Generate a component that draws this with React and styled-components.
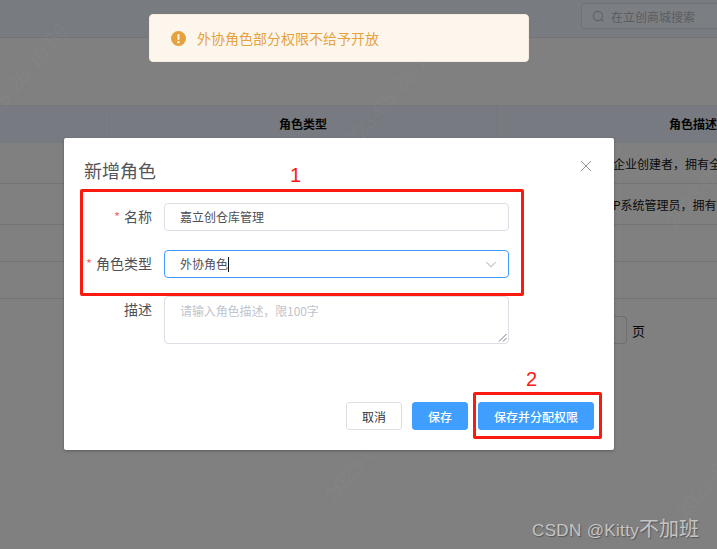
import React from 'react';
import styled, { createGlobalStyle } from 'styled-components';

const Global = createGlobalStyle`
  html, body { margin: 0; padding: 0; width: 717px; height: 549px; overflow: hidden; background: #808080; }
  * { box-sizing: border-box; }
  body { font-family: "Liberation Sans", "Noto Sans CJK SC", sans-serif; }
`;
const cjk = `"Noto Sans CJK SC", "Liberation Sans", sans-serif`;

const Page = styled.div`
  position: relative; width: 717px; height: 549px; overflow: hidden;
  display: flex; flex-direction: column; background: #808080; font-family: ${cjk}; font-size: 12px; color: #000;
`;
const TopBar = styled.header`
  height: 38px; flex: none; background: #787b80; border-bottom: 1px solid #727478;
  display: flex; justify-content: flex-end; align-items: flex-start; padding-top: 3px;
`;
const Search = styled.div`
  width: 140px; margin-right: -4px; height: 26px; border: 1px solid #707276; border-radius: 4px; background: #7b7e83;
  display: flex; align-items: center; gap: 6px; padding-left: 10px; color: #5b5c5f; font-size: 12px; white-space: nowrap;
`;
const Spacer = styled.div` height: 67px; flex: none; `;
const TableHead = styled.div`
  height: 38px; flex: none; background: #777a80; border-top: 1px solid #75777b;
  display: grid; grid-template-columns: 110px 387px 220px; font-size: 12px; font-weight: 700; color: #050505; line-height: 36px;
`;
const HeadCell = styled.div`
  text-align: center; white-space: nowrap;
  border-right: 1px solid #74777c;
  padding-left: ${p => p.$inset || 0}px;
  &:last-child { border-right: 0; text-align: left; }
`;
const Row = styled.div`
  height: ${p => p.$h}px; flex: none; border-bottom: 1px solid #747474; display: flex; justify-content: flex-end;
  align-items: center; font-size: 12px; color: #0a0a0a;
`;
const RowText = styled.span` width: 104px; white-space: nowrap; `;
const Pager = styled.div`
  display: flex; align-items: center; justify-content: flex-end; gap: 5px; padding: 17px 72px 0 0; font-size: 13px; color: #0a0a0a;
`;
const PageBox = styled.div` width: 20px; height: 28px; border: 1px solid #6f6f6f; border-left: none; border-radius: 0 4px 4px 0; `;

const Marks = styled.div` position: absolute; inset: 0; pointer-events: none; `;
const Mark = styled.span`
  position: absolute; left: ${p => p.$x}px; top: ${p => p.$y}px; transform: rotate(-50deg); white-space: nowrap;
  font-size: 21px; color: rgba(255,255,255,0.035); font-family: "Liberation Sans", sans-serif;
`;

const Message = styled.div`
  position: absolute; left: 149px; top: 14px; width: 380px; height: 48px; background: #fdf6ec; border-radius: 4px;
  border: 1px solid #f5ecdf; display: flex; align-items: center; gap: 11px; padding-left: 21px; color: #e6a23c; font-size: 14px;
`;
const Modal = styled.section`
  position: absolute; left: 64px; top: 138px; width: 550px; height: 312px; background: #fff; border-radius: 2px;
  box-shadow: 0 1px 3px rgba(0,0,0,.3); display: flex; flex-direction: column; padding: 20px;
`;
const ModalHead = styled.div` display: flex; justify-content: space-between; align-items: flex-start; height: 24px; `;
const Title = styled.h2` margin: 0; font-size: 18px; line-height: 24px; font-weight: 400; color: #54565b; `;
const Close = styled.button`
  border: 0; background: none; padding: 0; width: 12px; height: 12px; margin: 2px 2px 0 0; display: flex; color: #909399;
`;
const Form = styled.div` display: flex; flex-direction: column; gap: 19px; margin-top: 21px; margin-bottom: auto; `;
const FormRow = styled.div` display: flex; gap: 12px; margin-top: ${p => p.$pull ? '-1px' : '0'}; `;
const Label = styled.label`
  width: 68px; flex: none; text-align: right; font-size: 14px; line-height: 26px; color: #4d5057; white-space: nowrap;
  & > i { font-style: normal; color: #f56c6c; margin-right: 4px; font-size: 13px; }
`;
const Field = styled.div`
  width: 345px; height: ${p => p.$h || 28}px; border: 1px solid ${p => p.$focus ? '#409eff' : '#dcdfe6'}; border-radius: 4px;
  display: flex; align-items: center; justify-content: space-between; padding: 0 15px 2px; font-size: 12px; color: #4d4f55; position: relative;
`;
const Area = styled(Field)` align-items: flex-start; padding-top: 5px; color: #c0c4cc; line-height: 18px; letter-spacing: -0.1px; `;
const Caret = styled.span` display: inline-block; width: 1px; height: 15px; background: #111; vertical-align: -3px; `;
const Chevron = styled.svg` margin: 2px -4px 0 0; `;
const Grip = styled.svg` position: absolute; right: 1px; bottom: 1px; `;
const Footer = styled.div` display: flex; justify-content: flex-end; gap: 10px; `;
const Button = styled.button`
  height: 28px; width: ${p => p.$w}px; border-radius: 3px; font-size: 12px; font-family: inherit; padding: 0;
  border: 1px solid ${p => p.$primary ? '#409eff' : '#dcdfe6'};
  background: ${p => p.$primary ? '#409eff' : '#fff'}; color: ${p => p.$primary ? '#fff' : '#33363b'};
  font-weight: ${p => p.$primary ? 500 : 400};
`;
const RedBox = styled.div`
  position: absolute; left: ${p => p.$x}px; top: ${p => p.$y}px; width: ${p => p.$w}px; height: ${p => p.$h}px;
  border: 3px solid #fb1a0f; border-radius: 2px; pointer-events: none;
`;
const Num = styled.span`
  position: absolute; left: ${p => p.$x}px; top: ${p => p.$y}px; color: #fb1a0f; font-size: 20px; line-height: 24px;
  font-family: "Liberation Sans", sans-serif;
`;
const Credit = styled.span`
  position: absolute; left: 532px; top: 517px; font-size: 17px; letter-spacing: 0.35px; line-height: 22px; color: #c4c4c4; white-space: nowrap;
  text-shadow: 1px 1px 1px #555; font-family: "Liberation Sans", "Noto Sans CJK SC", sans-serif;
`;
const CreditCjk = styled.span` font-size: 20px; letter-spacing: 0; font-family: "Noto Sans CJK SC", sans-serif; `;

const marks = [[-72,78],[313,78],[300,423],[640,150],[650,440]];

export default function App() {
  return (
    <Page>
      <Global />
      <TopBar>
        <Search>
          <svg width="13" height="13" viewBox="0 0 13 13" fill="none" stroke="#5f6164" strokeWidth="1.1"><circle cx="6" cy="6" r="4.6"/><path d="M9.4 9.6l1.8 1.8"/></svg>
          在立创商城搜索
        </Search>
      </TopBar>
      <Spacer />
      <TableHead>
        <HeadCell />
        <HeadCell>角色类型</HeadCell>
        <HeadCell $inset={172}>角色描述</HeadCell>
      </TableHead>
      <Row $h={41}><RowText>企业创建者，拥有全部</RowText></Row>
      <Row $h={41}><RowText>P系统管理员，拥有全</RowText></Row>
      <Row $h={37} />
      <Row $h={37} />
      <Pager><PageBox />页</Pager>
      <Marks>
        {marks.map(([x, y], i) => <Mark key={i} $x={x} $y={y}>2023-05-26 10:59</Mark>)}
      </Marks>
      <Message>
        <svg width="15" height="15" viewBox="0 0 14 14"><circle cx="7" cy="7" r="7" fill="#e6a23c"/><rect x="6.1" y="2.8" width="1.8" height="5.6" rx=".7" fill="#fdf6ec"/><circle cx="7" cy="10.4" r="1.1" fill="#fdf6ec"/></svg>
        外协角色部分权限不给予开放
      </Message>
      <Modal>
        <ModalHead>
          <Title>新增角色</Title>
          <Close aria-label="关闭">
            <svg width="12" height="12" viewBox="0 0 12 12" stroke="#909399" strokeWidth="1"><path d="M1 1l10 10M11 1L1 11"/></svg>
          </Close>
        </ModalHead>
        <Form>
          <FormRow>
            <Label><i>*</i>名称</Label>
            <Field>嘉立创仓库管理</Field>
          </FormRow>
          <FormRow>
            <Label><i>*</i>角色类型</Label>
            <Field $focus>
              <span>外协角色<Caret /></span>
              <Chevron width="12" height="7" viewBox="0 0 14 8" fill="none" stroke="#c0c4cc" strokeWidth="1.3"><path d="M1.5 1.2L7 6.6l5.5-5.4"/></Chevron>
            </Field>
          </FormRow>
          <FormRow $pull>
            <Label>描述</Label>
            <Area $h={48}>
              请输入角色描述，限100字
              <Grip width="9" height="9" viewBox="0 0 9 9" stroke="#555" strokeWidth=".8"><path d="M1 8.5L8.5 1M5 8.5L8.5 5"/></Grip>
            </Area>
          </FormRow>
        </Form>
        <Footer>
          <Button $w={56}>取消</Button>
          <Button $w={56} $primary>保存</Button>
          <Button $w={116} $primary>保存并分配权限</Button>
        </Footer>
      </Modal>
      <RedBox $x={80} $y={189} $w={444} $h={107} />
      <RedBox $x={473} $y={392} $w={129} $h={47} />
      <Num $x={290} $y={163}>1</Num>
      <Num $x={526} $y={367}>2</Num>
      <Credit>CSDN @Kitty<CreditCjk>不加班</CreditCjk></Credit>
    </Page>
  );
}
